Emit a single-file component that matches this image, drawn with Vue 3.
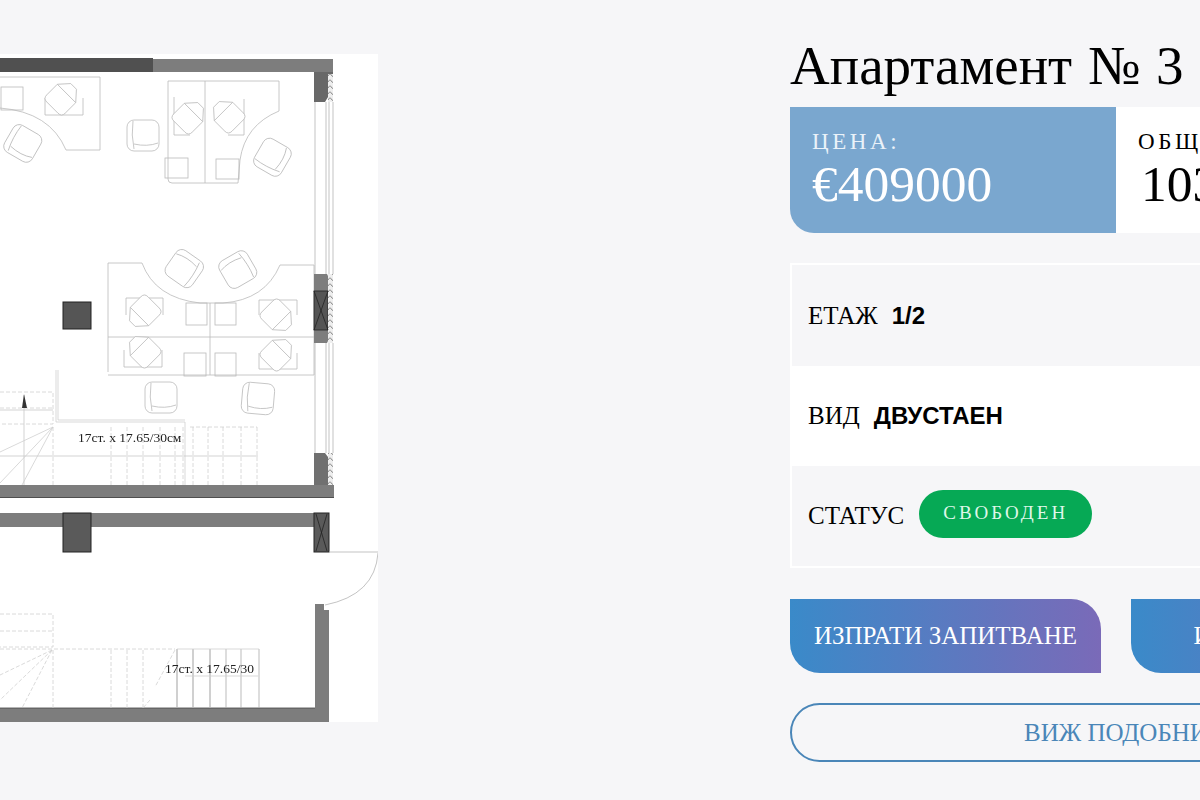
<script setup>
const armchairs = [
  { x: 23, y: 143, r: 30 },
  { x: 143, y: 135, r: 0 },
  { x: 272, y: 157, r: -60 },
  { x: 184, y: 269, r: 215 },
  { x: 238, y: 270, r: 150 },
  { x: 161, y: 397, r: 0 },
  { x: 258, y: 398, r: 5 }
]
const officeChairs = [
  { x: 63, y: 97, r: 45 },
  { x: 190, y: 116, r: 45 },
  { x: 227, y: 115, r: -45 },
  { x: 143, y: 313, r: 225 },
  { x: 143, y: 350, r: 315 },
  { x: 278, y: 317, r: 135 },
  { x: 278, y: 353, r: 45 }
]
const squares = [
  [1, 87, 22, 23], [165, 158, 23, 20], [216, 159, 23, 20],
  [186, 303, 21, 22], [215, 303, 21, 22], [184, 353, 22, 23], [215, 353, 21, 23]
]
const tables = [
  'M45 98V115H83V98', 'M174 97V135H190', 'M228 135H244V99',
  'M126 315V298H163V315', 'M124 350V367H162V350', 'M259 315V300H297V315', 'M259 353V369H297V353'
]
const upperDash = [111, 127, 143, 160, 175, 183, 193, 208, 223, 241, 257]
const lowerDash = [53, 111, 127, 143]
const lowerSolid = [177, 193, 210, 226, 241, 259]
const rows = [
  { label: 'ЕТАЖ', value: '1/2' },
  { label: 'ВИД', value: 'ДВУСТАЕН' }
]
</script>

<template>
  <main class="page">
    <section class="plan-col">
      <svg class="plan" width="378" height="668" viewBox="0 54 378 668">
        <defs>
          <pattern id="hatch" width="5" height="6" patternUnits="userSpaceOnUse">
            <rect width="5" height="6" fill="#eee" />
            <path d="M0 1.5L2.5 4.5L5 1.5" fill="none" stroke="#888" stroke-width="1" />
          </pattern>
          <g id="armchair">
            <rect x="-16" y="-15" width="32" height="31" rx="7" />
            <path d="M-10-14Q-12 0-9 14M-9 9Q4 12 15 8" />
          </g>
          <g id="office">
            <path d="M-13-5V10Q-13 15-8 15H8Q13 15 13 10V-5L4-15H-4Z" />
            <path d="M-13-5H13" />
          </g>
        </defs>
        <rect y="54" width="378" height="668" fill="#fff" />

        <g fill="none" stroke="#bababa" stroke-width="0.8">
          <path d="M0 77H100V150H66Q50 112 0 108" />
          <path d="M168 81H279V111Q245 125 240 160L238 183H172Q168 183 168 179ZM205 81V183" />
          <path d="M108 372V263H142Q155 298 200 303H223Q265 300 280 265H314V375H108M108 337H314M210 303V375" />
          <rect v-for="s in squares" :key="s.join()" :x="s[0]" :y="s[1]" :width="s[2]" :height="s[3]" />
          <path v-for="t in tables" :key="t" :d="t" />
          <use v-for="c in armchairs" :key="c.x" href="#armchair" :transform="`translate(${c.x} ${c.y}) rotate(${c.r})`" />
          <use v-for="c in officeChairs" :key="c.x + c.y" href="#office" fill="#fff" :transform="`translate(${c.x} ${c.y}) rotate(${c.r})`" />
        </g>

        <g fill="#7d7d7d">
          <rect y="58" width="153" height="14" fill="#505050" />
          <rect x="153" y="59" width="180" height="13" />
          <path d="M314 72H333V74H328V97L325 102H314Z" fill="#686868" />
          <path d="M314 274H327L329 278H333V339H329L327 343H314Z" />
          <rect x="314" y="291" width="14" height="39" fill="#555" stroke="#222" stroke-width="0.8" />
          <path d="M314 453H325L328 457H333V487H314Z" fill="#707070" />
          <rect y="485" width="334" height="13" />
          <rect y="513" width="315" height="14" />
          <rect x="63" y="513" width="28" height="39" fill="#5a5a5a" stroke="#222" stroke-width="1" />
          <rect x="314" y="513" width="15" height="39" fill="#5a5a5a" stroke="#222" stroke-width="1" />
          <rect x="63" y="302" width="28" height="27" fill="#555" stroke="#222" stroke-width="1" />
          <path d="M315 604H324V610H329V722H0V708H315Z" />
        </g>
        <g fill="url(#hatch)">
          <rect x="328" y="74" width="5" height="28" />
          <rect x="328" y="274" width="5" height="69" />
          <rect x="328" y="453" width="5" height="32" />
        </g>

        <g fill="none" stroke="#222" stroke-width="0.8">
          <path d="M314 291L328 330M328 291L314 330M316 514L327 551M327 514L316 551" />
          <path d="M0 497.5H334M0 708H315" stroke="#444" />
        </g>

        <g fill="none" stroke="#b4b4b4" stroke-width="0.8">
          <path d="M315 102V274M326 102V274M329 102V274M333 102V274M326 343V453M329 343V453M333 343V453M315 343V453" />
          <path d="M329 552H378M378 553Q375 595 325 605" />
          <path d="M56 370V422H185V485M58 370V420H185" stroke="#cfcfcf" />
          <path d="M0 410H53M24 395V485M0 456H258M177 649V708M193 649V708M210 649V708" stroke="#c8c8c8" />
          <path d="M53 427L0 452M53 427L0 483M53 427L22 485" stroke="#cfcfcf" />
          <path v-for="x in lowerSolid" :key="x" :d="`M${x} 649V708`" stroke="#aaa" />
          <path d="M177 649H259M185 676H258" stroke="#cfcfcf" />
        </g>
        <g fill="none" stroke="#d0d0d0" stroke-width="0.8" stroke-dasharray="4 2">
          <path d="M0 392H53V424H0M0 408H53M53 427V485" />
          <path v-for="x in upperDash" :key="x" :d="`M${x} 427V485`" />
          <path d="M190 427H257" />
          <path d="M0 614H53V647H0M0 631H53M0 649H175" />
          <path v-for="x in lowerDash" :key="x" :d="`M${x} 650V708`" />
          <path d="M52 650L0 675M52 650L0 700M52 650L22 708M175 650L155 687M150 700L143 708" />
        </g>
        <path d="M24 394L22 408H27Z" fill="#333" />
        <text class="dim" x="78" y="442">17ст. х 17.65/30см</text>
        <text class="dim" x="165" y="673">17ст. х 17.65/30</text>
      </svg>
    </section>

    <section class="info">
      <h1 class="title">Апартамент № 3</h1>

      <div class="stats">
        <div class="stat price">
          <span class="stat-label">ЦЕНА:</span>
          <strong class="stat-value">€409000</strong>
        </div>
        <div class="stat area">
          <span class="stat-label">ОБЩА ПЛОЩ:</span>
          <strong class="stat-value">103 м²</strong>
        </div>
      </div>

      <div class="table">
        <div v-for="row in rows" :key="row.label" class="row">
          <span class="row-label">{{ row.label }}</span>
          <b class="row-value">{{ row.value }}</b>
        </div>
        <div class="row">
          <span class="row-label">СТАТУС</span>
          <span class="badge">СВОБОДЕН</span>
        </div>
      </div>

      <div class="actions">
        <button class="cta" type="button">ИЗПРАТИ ЗАПИТВАНЕ</button>
        <button class="cta" type="button">ИЗТЕГЛИ ПЛАН</button>
      </div>
      <button class="ghost" type="button">ВИЖ ПОДОБНИ</button>
    </section>
  </main>
</template>

<style>
html, body { background: #f6f6f8; overflow: hidden; }
</style>

<style scoped>
.page {
  display: flex;
  width: 1200px;
  height: 800px;
  overflow: hidden;
  background: #f6f6f8;
  font-family: "Liberation Serif", serif;
  color: #000;
}
.plan-col {
  flex: 0 0 790px;
  padding-top: 54px;
  box-sizing: border-box;
}
.plan { display: block; filter: blur(0.4px); }
.dim { font-family: "Liberation Serif", serif; font-size: 13.5px; fill: #222; }
.info {
  flex: 0 0 652px;
  padding-top: 35px;
  box-sizing: border-box;
}
.title {
  margin: 0;
  height: 72px;
  font-size: 55px;
  line-height: 62px;
  font-weight: 400;
  word-spacing: 2px;
  white-space: nowrap;
}
.stats {
  display: grid;
  grid-template-columns: 326px 326px;
  height: 126px;
}
.stat {
  display: flex;
  flex-direction: column;
  box-sizing: border-box;
  padding: 21px 22px 0;
  white-space: nowrap;
}
.price {
  background: #7aa7cf;
  color: #fff;
  border-bottom-left-radius: 24px;
}
.area { background: #fff; }
.stat-label {
  font-size: 23px;
  line-height: 27px;
  letter-spacing: 3.6px;
}
.price .stat-label { color: #eaf2f9; }
.stat-value {
  font-size: 51.5px;
  line-height: 58px;
  font-weight: 400;
}
.area .stat-value { padding-left: 3px; }
.table {
  margin-top: 30px;
  border: 2px solid #fff;
  height: 305px;
  box-sizing: border-box;
  display: grid;
  grid-template-rows: 101px 100px 100px;
}
.row {
  display: flex;
  align-items: center;
  gap: 14px;
  padding: 0 16px;
  font-size: 25px;
}
.row:nth-child(2) { background: #fff; }
.row-value {
  font-family: "Liberation Sans", sans-serif;
  font-size: 24px;
  font-weight: 700;
}
.badge {
  display: inline-flex;
  align-items: center;
  justify-content: center;
  width: 173px;
  height: 48px;
  margin: -4px 0 0 1px;
  padding-bottom: 2px;
  box-sizing: border-box;
  border-radius: 24px;
  background: #06a955;
  color: #dff7e9;
  font-size: 19px;
  letter-spacing: 3px;
}
.actions {
  display: flex;
  justify-content: space-between;
  margin-top: 31px;
}
.cta {
  width: 311px;
  height: 74px;
  padding: 0;
  border: 0;
  border-radius: 0 30px 0 30px;
  background: linear-gradient(90deg, #3a8ac9, #7a6ab8);
  color: #fff;
  font-family: inherit;
  font-size: 25px;
  white-space: nowrap;
}
.ghost {
  display: block;
  width: 100%;
  height: 59px;
  margin-top: 30px;
  padding: 0;
  box-sizing: border-box;
  border: 2.5px solid #4a86b8;
  border-radius: 30px;
  background: transparent;
  color: #4a86b8;
  font-family: inherit;
  font-size: 25px;
}
</style>
